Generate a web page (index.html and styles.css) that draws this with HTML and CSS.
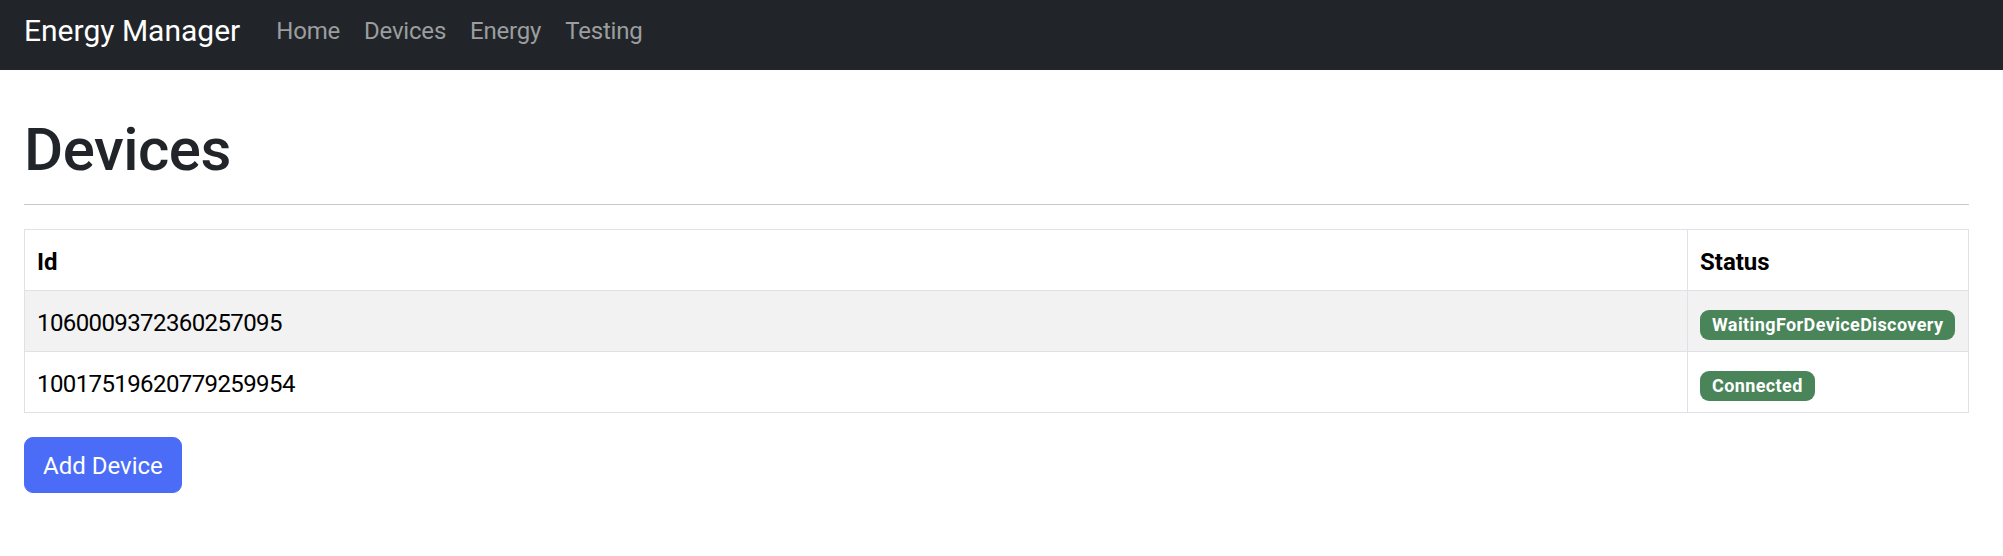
FILE: index.html
```html
<!DOCTYPE html>
<html lang="en">

<head>
    <meta charset="UTF-8">
    <meta name="viewport" content="width=device-width, initial-scale=1.0">
    <title>Devices - Energy Manager</title>
    <link rel="stylesheet" href="styles.css">
</head>

<body>
    <!-- 顶部导航 -->
    <nav class="navbar">
        <a href="#" class="brand">Energy Manager</a>
        <ul class="nav">
            <li><a href="#">Home</a></li>
            <li><a href="#">Devices</a></li>
            <li><a href="#">Energy</a></li>
            <li><a href="#">Testing</a></li>
        </ul>
    </nav>
    <div class="content">
        <h1 class="page_title">Devices</h1>
        <hr class="divider">
        <table class="device_table">
            <thead>
                <tr>
                    <th class="col_id">Id</th>
                    <th class="col_status">Status</th>
                </tr>
            </thead>
            <tbody>
                <tr>
                    <td class="device_id">1060009372360257095</td>
                    <td><span class="badge">WaitingForDeviceDiscovery</span></td>
                </tr>
                <tr>
                    <td class="device_id">10017519620779259954</td>
                    <td><span class="badge">Connected</span></td>
                </tr>
            </tbody>
        </table>
        <button type="button" class="btn_add">Add Device</button>
    </div>
</body>

</html>
```

FILE: styles.css
```css
body,html,ul,h1 {
    margin: 0;
    padding: 0;
}
body {
    font-family: "Segoe UI", Roboto, "Noto Sans", sans-serif;
    font-size: 24px;
    line-height: 1.5;
    color: #212529;
    background-color: #ffffff;
}
a {
    text-decoration: none;
}
/* 导航栏 */
.navbar {
    display: flex;
    align-items: flex-start;
    height: 70px;
    padding: 8px 24px 0;
    box-sizing: border-box;
    background-color: #212529;
}
.brand {
    margin-right: 24px;
    font-size: 30px;
    line-height: 45px;
    color: #ffffff;
}
.nav {
    display: flex;
    list-style: none;
    margin-top: 5px;
}
.nav a {
    display: block;
    padding: 0 12px;
    line-height: 36px;
    color: #9b9d9f;
    letter-spacing: -0.2px;
}
/* 内容区 */
.content {
    padding: 0 34px 0 24px;
}
.page_title {
    margin-top: 44px;
    font-size: 60px;
    font-weight: 500;
    line-height: 72px;
    letter-spacing: -0.5px;
}
.divider {
    margin: 18px 0 24px;
    border: 0;
    border-top: 1px solid #c8c9ca;
}
.device_table {
    width: 100%;
    border-collapse: collapse;
    border: 1px solid #dee2e6;
    margin-bottom: 24px;
    color: #000000;
}
.device_table th,.device_table td {
    padding: 14px 12px 10px;
    border: 1px solid #dee2e6;
    text-align: left;
    line-height: 36px;
}
.device_table th {
    font-weight: 700;
}
.col_status {
    width: 256px;
}
.device_table tbody tr:nth-child(odd) {
    background-color: #f2f2f2;
}
.device_id {
    letter-spacing: -0.6px;
}
.badge {
    display: inline-block;
    padding: 6px 12px;
    border-radius: 9px;
    background-color: #4a8459;
    color: #ffffff;
    font-size: 18px;
    font-weight: 700;
    line-height: 1;
    letter-spacing: 0.4px;
}
.btn_add {
    padding: 10px 18px 8px;
    border: 1px solid #4a6cf7;
    border-radius: 9px;
    background-color: #4a6cf7;
    color: #ffffff;
    font-family: inherit;
    font-size: 24px;
    line-height: 36px;
    cursor: pointer;
}
```
